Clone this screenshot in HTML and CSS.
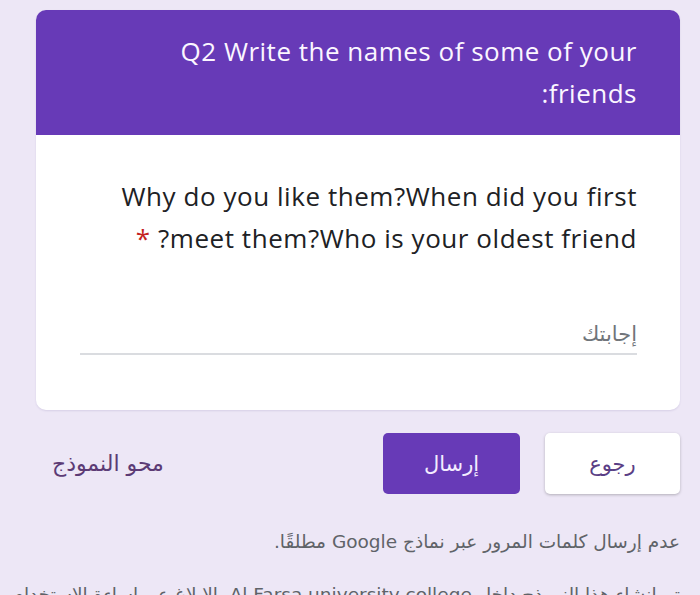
FILE: index.html
```html
<!DOCTYPE html>
<html lang="ar" dir="rtl">
<head>
<meta charset="utf-8">
<link rel="stylesheet" href="styles.css">
</head>
<body>
<div class="page">
  <div class="card">
    <div class="card-head">
      <p class="head-title">Q2 Write the names of some of your<br>friends:</p>
    </div>
    <div class="card-body">
      <p class="question">Why do you like them?When did you first<br>meet them?Who is your oldest friend?<span class="req"> *</span></p>
      <div class="answer">
        <span class="placeholder">إجابتك</span>
      </div>
    </div>
  </div>
  <div class="actions">
    <button class="btn btn-back">رجوع</button>
    <button class="btn btn-submit">إرسال</button>
    <span class="clear">محو النموذج</span>
  </div>
  <p class="note">عدم إرسال كلمات المرور عبر نماذج Google مطلقًا.</p>
  <p class="made">تم إنشاء هذا النموذج داخل Al Farsa university college. الإبلاغ عن إساءة الاستخدام</p>
</div>
</body>
</html>
```

FILE: styles.css
```css
html, body {
  margin: 0;
  padding: 0;
  background: #ede7f6;
  overflow: hidden;
}
body {
  font-family: "Open Sans", "DejaVu Sans", sans-serif;
}
.page {
  padding: 10px 20px 0 36px;
}
.card {
  background: #fff;
  border-radius: 10px;
  overflow: hidden;
  box-shadow: 0 1px 2px rgba(60, 40, 120, 0.12);
}
.card-head {
  background: #673ab7;
  padding: 20px 43px 21px 40px;
  height: 84px;
}
.head-title {
  margin: 0;
  color: #fbf6ff;
  font-size: 26px;
  letter-spacing: 0.5px;
  line-height: 42px;
  text-align: right;
  white-space: nowrap;
}
.card-body {
  padding: 40px 43px 55px 44px;
}
.question {
  margin: 0;
  color: #202124;
  font-size: 26px;
  letter-spacing: 0.55px;
  line-height: 42px;
  text-align: right;
  white-space: nowrap;
}
.req {
  color: #c5221f;
}
.answer {
  margin-top: 60px;
  border-bottom: 2px solid #dadce0;
  padding-bottom: 4px;
  height: 30px;
}
.placeholder {
  font-family: "DejaVu Sans", sans-serif;
  color: #70757a;
  font-size: 21px;
  line-height: 30px;
}
.actions {
  display: flex;
  align-items: center;
  gap: 25px;
  margin-top: 23px;
  height: 61px;
}
.btn {
  height: 61px;
  border: none;
  border-radius: 5px;
  font-family: "DejaVu Sans", sans-serif;
  font-size: 21px;
  cursor: pointer;
}
.btn-back {
  width: 135px;
  background: #fff;
  color: #5a3e85;
  box-shadow: 0 1px 3px rgba(0, 0, 0, 0.25);
}
.btn-submit {
  width: 137px;
  background: #673ab7;
  color: #f3ecff;
}
.clear {
  margin-right: auto;
  padding-left: 16px;
  font-family: "DejaVu Sans", sans-serif;
  font-size: 22px;
  color: #5c3b75;
}
.note {
  margin: 34px 0 0;
  font-family: "DejaVu Sans", sans-serif;
  font-size: 18.5px;
  line-height: 28px;
  color: #5f6368;
}
.made {
  margin: 25px 0 0;
  font-family: "DejaVu Sans", sans-serif;
  font-size: 18.5px;
  line-height: 28px;
  color: #5f6368;
  white-space: nowrap;
}
```
